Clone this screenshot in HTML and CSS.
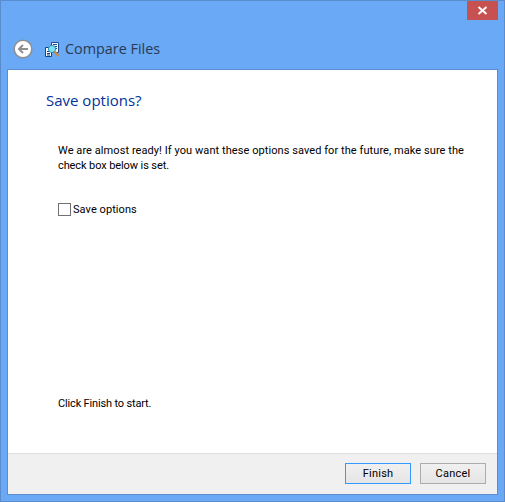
FILE: index.html
```html
<!DOCTYPE html>
<html lang="en">
<head>
<meta charset="utf-8">
<title>Compare Files</title>
<link rel="stylesheet" href="styles.css">
</head>
<body>
<div class="window">
  <div class="titlebar">
    <button class="close" aria-label="Close">
      <svg width="11" height="9" viewBox="0 0 11 9"><path d="M1.5 1 L9.5 8 M9.5 1 L1.5 8" stroke="#fff" stroke-width="2" fill="none"/></svg>
    </button>
  </div>
  <div class="header">
    <svg class="back" width="20" height="20" viewBox="0 0 20 20">
      <circle cx="10" cy="10" r="8.8" fill="#fff" stroke="#8f8f8f" stroke-width="1.5"/>
      <path d="M15 10 H6.5 M10 6 L6 10 L10 14" fill="none" stroke="#8f8f8f" stroke-width="2"/>
    </svg>
    <svg class="app-icon" width="16" height="16" viewBox="1 0 16 16">
      <path d="M7.5 1.5 H14.5 V11.5 H7.5 Z" fill="#f2f5fa" stroke="#1f4f90" stroke-width="1"/>
      <path d="M9 3.5 H13 M11 5.5 H13 M11 7.5 H13" stroke="#1f4f90" stroke-width="1"/>
      <path d="M1.5 6.5 H7.5 V15.5 H1.5 Z" fill="#f7f9fc" stroke="#17407c" stroke-width="1"/>
      <path d="M3 10.5 H6 M3 12.5 H6 M3 14 H6" stroke="#17407c" stroke-width="1"/>
      <circle cx="8" cy="8" r="3.6" fill="#7fe3f5" stroke="#2a8fb8" stroke-width="1"/>
      <path d="M10.5 10.5 L14.5 15" stroke="#d9862f" stroke-width="2"/>
    </svg>
    <span class="header-title">Compare Files</span>
  </div>
  <div class="client">
    <main class="content">
      <h1 class="heading">Save options?</h1>
      <p class="message">We are almost ready! If you want these options saved for the future, make sure the<br><span class="tight">check box below is set.</span></p>
      <label class="option"><span class="checkbox"></span><span>Save options</span></label>
      <p class="hint">Click Finish to start.</p>
    </main>
    <footer class="footer">
      <button class="btn btn-default">Finish</button>
      <button class="btn">Cancel</button>
    </footer>
  </div>
</div>
</body>
</html>
```
FILE: styles.css
```css
* { box-sizing: border-box; }
html, body { margin: 0; padding: 0; }
body {
  width: 505px;
  height: 502px;
  overflow: hidden;
  font-family: Roboto, "Open Sans", sans-serif;
  font-size: 11px;
  letter-spacing: 0.07px;
  color: #000;
}
.window {
  width: 505px;
  height: 502px;
  background: #69a9f5;
  border: 1px solid #5b8ccb;
  padding: 0 6px 6px;
  display: flex;
  flex-direction: column;
}
.titlebar {
  height: 19px;
  display: flex;
  justify-content: flex-end;
  flex: none;
}
.close {
  width: 31px;
  height: 19px;
  padding: 0;
  border: 0;
  background: #c75050;
  display: flex;
  align-items: center;
  justify-content: center;
}
.header {
  height: 49px;
  flex: none;
  display: flex;
  align-items: center;
  padding: 9px 0 0 6px;
}
.back { flex: none; }
.app-icon { flex: none; margin-left: 12px; }
.header-title {
  margin-left: 4px;
  padding-bottom: 2px;
  font-family: "Open Sans", sans-serif;
  font-size: 14.4px;
  letter-spacing: 0;
  color: #2b3a52;
}
.client {
  flex: 1;
  background: #fff;
  border: 1px solid #5b8ccb;
  display: flex;
  flex-direction: column;
  min-height: 0;
}
.content {
  flex: 1;
  padding: 20px 20px 0 38px;
  display: flex;
  flex-direction: column;
}
.heading {
  margin: 0;
  font-family: "Open Sans", sans-serif;
  font-size: 15px;
  font-weight: 400;
  line-height: 21px;
  letter-spacing: 0;
  color: #003399;
}
.message {
  margin: 32px 0 0 12px;
  line-height: 15px;
}
.tight { letter-spacing: -0.1px; }
.option {
  margin: 29px 0 0 12px;
  display: flex;
  align-items: center;
  gap: 2px;
  line-height: 15px;
}
.checkbox {
  width: 13px;
  height: 13px;
  border: 1px solid #707070;
  background: #fff;
  flex: none;
}
.hint {
  margin: auto 0 0 12px;
  padding-bottom: 42px;
  line-height: 15px;
  letter-spacing: -0.16px;
}
.footer {
  height: 41px;
  flex: none;
  background: #f0f0f0;
  border-top: 1px solid #dfdfdf;
  display: flex;
  justify-content: flex-end;
  align-items: flex-start;
  gap: 9px;
  padding: 9px 11px 0 0;
}
.btn {
  width: 66px;
  height: 21px;
  padding: 0;
  font: inherit;
  letter-spacing: 0.25px;
  color: #000;
  border: 1px solid #acacac;
  background: linear-gradient(#f0f0f0, #e5e5e5);
}
.btn-default { border-color: #3399ff; }
```
